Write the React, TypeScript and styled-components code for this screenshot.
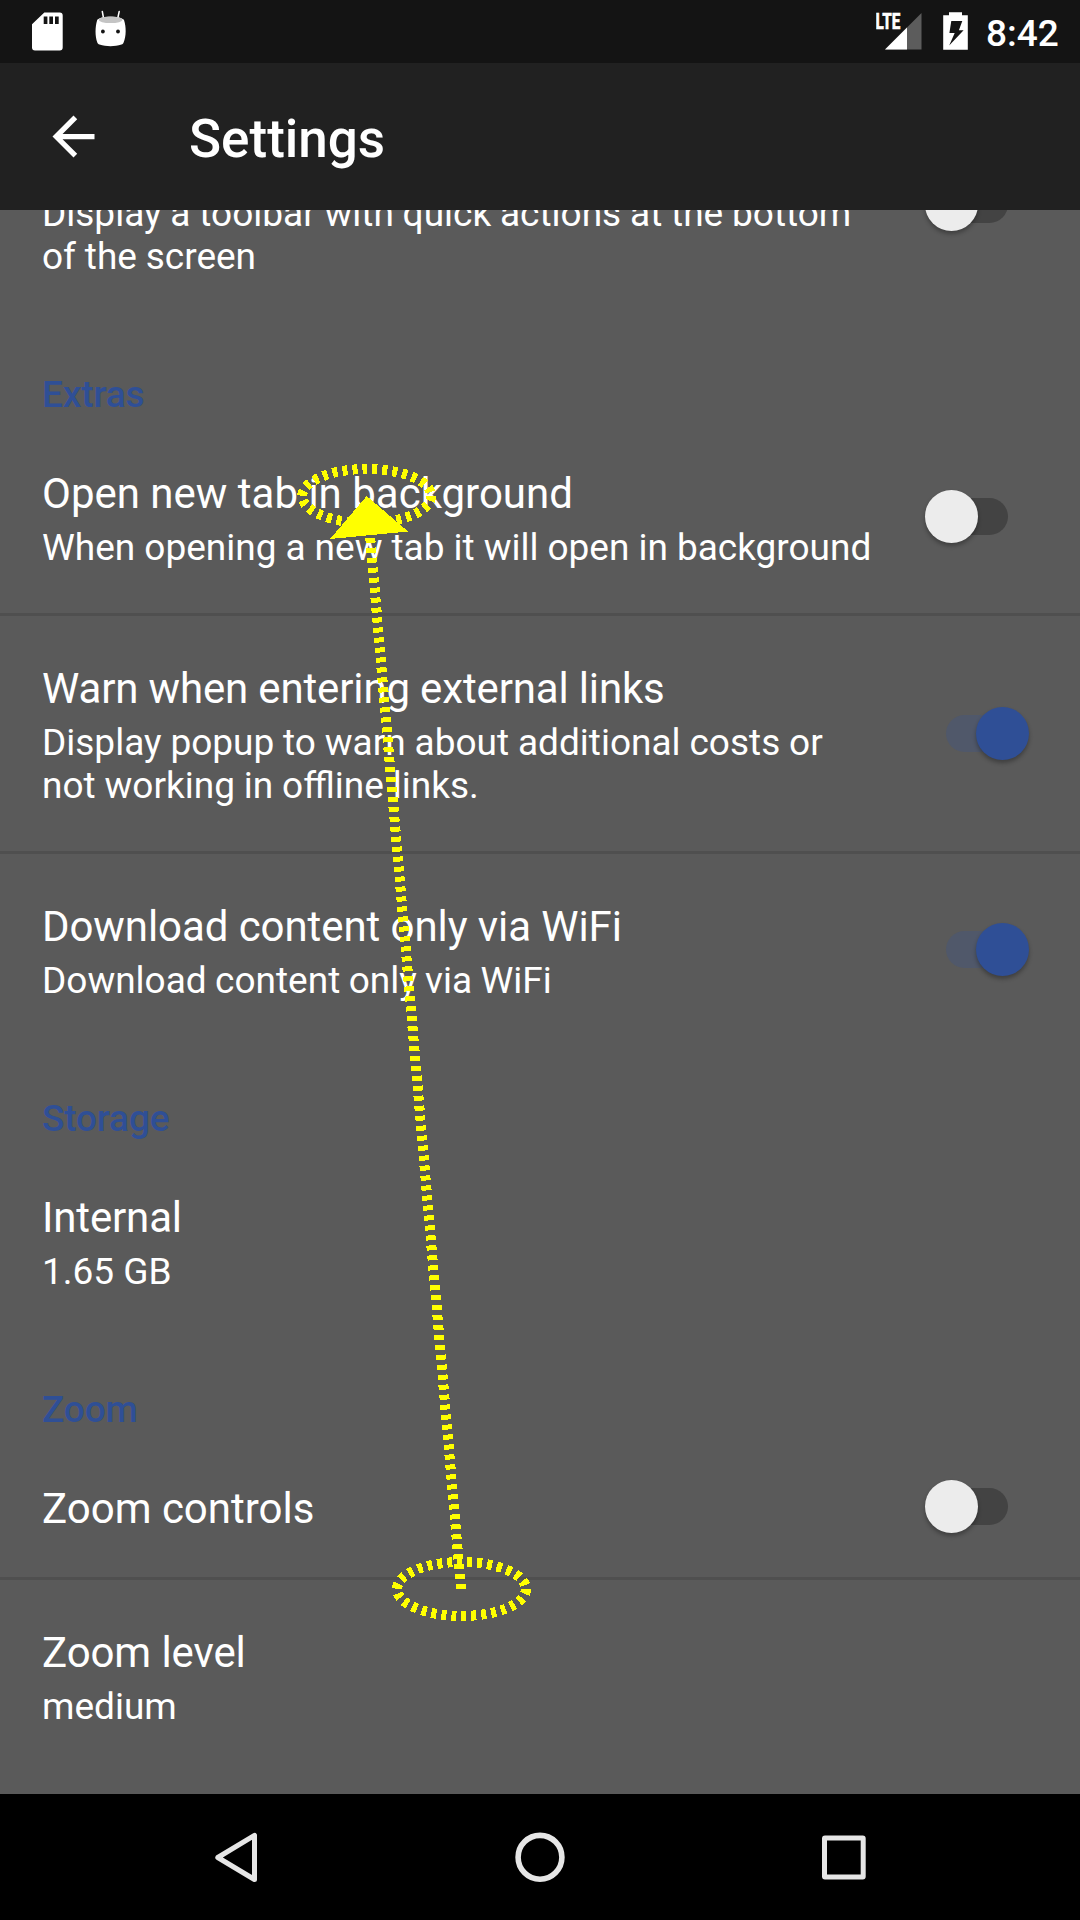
import React from "react";
import styled, { createGlobalStyle } from "styled-components";

const GlobalStyle = createGlobalStyle`
  * { box-sizing: border-box; }
  body {
    margin: 0;
    background: #5a5a5a;
    font-family: Roboto, "Liberation Sans", sans-serif;
    color: #fff;
  }
`;

const Screen = styled.div`
  position: relative;
  display: flex;
  flex-direction: column;
  width: 1080px;
  height: 1920px;
  overflow: hidden;
  background: #5a5a5a;
`;

const StatusBar = styled.header`
  display: flex;
  justify-content: space-between;
  height: 63px;
  flex: none;
  padding: 0 21px 0 32px;
  background: #141414;
`;

const StatusGroup = styled.div<{ $gap: number }>`
  display: flex;
  gap: ${(p) => p.$gap}px;
`;

const Clock = styled.time`
  width: 73px;
  margin-left: 18px;
  padding-top: 12px;
  font-size: 37px;
  font-weight: 500;
  line-height: 43px;
  white-space: nowrap;
`;

const AppBar = styled.div`
  display: flex;
  align-items: center;
  height: 147px;
  flex: none;
  padding-left: 42px;
  gap: 84px;
  background: #212121;
`;

const BarTitle = styled.h1`
  margin: 4px 0 0;
  font-size: 53px;
  font-weight: 500;
  line-height: 62px;
`;

const Viewport = styled.main`
  flex: 1;
  min-height: 0;
  overflow: hidden;
`;

const List = styled.div<{ $scroll: number }>`
  display: flex;
  flex-direction: column;
  margin-top: -${(p) => p.$scroll}px;
`;

const Category = styled.h2`
  height: 96px;
  flex: none;
  margin: 0;
  padding: 48px 42px 0;
  font-size: 37px;
  font-weight: 500;
  line-height: 43px;
  letter-spacing: -0.15px;
  color: #2f4f96;
`;

const Row = styled.div<{ $divider?: boolean }>`
  display: flex;
  align-items: center;
  justify-content: space-between;
  flex: none;
  padding: 0 51px 0 42px;
  border-bottom: 3px solid ${(p) => (p.$divider ? "#4f4f4f" : "transparent")};
`;

const RowText = styled.div<{ $untitled?: boolean }>`
  padding: ${(p) => (p.$untitled ? 97 : 49)}px 0 44px;
`;

const RowTitle = styled.div<{ $tracking: number }>`
  font-size: 42px;
  line-height: 48px;
  letter-spacing: ${(p) => p.$tracking}px;
`;

const Summary = styled.div<{ $wordGap: number }>`
  margin-top: 8px;
  font-size: 37px;
  line-height: 43px;
  word-spacing: ${(p) => p.$wordGap}px;
  white-space: pre;
`;

const Toggle = styled.div<{ $on: boolean }>`
  display: flex;
  align-items: center;
  justify-content: ${(p) => (p.$on ? "flex-end" : "flex-start")};
  width: 104px;
  height: 53px;
  margin-bottom: 1px;
`;

const Track = styled.div<{ $on: boolean }>`
  width: 62px;
  height: 37px;
  flex: none;
  margin: ${(p) => (p.$on ? "0 -32px 0 0" : "0 0 0 -32px")};
  order: ${(p) => (p.$on ? 0 : 1)};
  border-radius: 19px;
  background: ${(p) => (p.$on ? "#50586a" : "#434343")};
`;

const Thumb = styled.div<{ $on: boolean }>`
  position: relative;
  width: 53px;
  height: 53px;
  flex: none;
  order: ${(p) => (p.$on ? 1 : 0)};
  border-radius: 50%;
  background: ${(p) => (p.$on ? "#2f4f96" : "#ececec")};
  box-shadow: 0 3px 4px rgba(0, 0, 0, 0.3);
`;

const NavBar = styled.nav`
  display: flex;
  align-items: center;
  justify-content: center;
  gap: 241px;
  height: 126px;
  flex: none;
  padding-right: 1px;
  background: #000;
`;

const Overlay = styled.svg`
  position: absolute;
  inset: 0;
  pointer-events: none;
`;

const Switch = ({ on }: { on: boolean }) => (
  <Toggle $on={on} role="switch" aria-checked={on}>
    <Track $on={on} />
    <Thumb $on={on} />
  </Toggle>
);

type SettingProps = {
  title?: string;
  summary?: string;
  on?: boolean;
  divider?: boolean;
  tracking?: number;
  wordGap?: number;
};

const Setting = ({ title, summary, on, divider, tracking = 0, wordGap = 0 }: SettingProps) => (
  <Row $divider={divider}>
    <RowText $untitled={!title}>
      {title && <RowTitle $tracking={tracking}>{title}</RowTitle>}
      {summary && <Summary $wordGap={wordGap}>{summary}</Summary>}
    </RowText>
    {on !== undefined && <Switch on={on} />}
  </Row>
);

const SdCard = () => (
  <svg width="31" height="63" viewBox="32 0 31 63">
    <path d="M44.3 12.5H59.7a3 3 0 0 1 3 3V47.500a3 3 0 0 1-3 3H35a3 3 0 0 1-3-3V24.300z" fill="#fff" />
    <path d="M43.700 16.500h3.700v7.500h-3.700zM49.300 16.500h3.700v7.500h-3.700zM55 16.500h3.700v7.500H55z" fill="#141414" />
  </svg>
);

const DroidHead = () => (
  <svg width="32" height="63" viewBox="95 0 32 63">
    <path d="M102.300 11.500l1.300 7M119.200 11.500l-1.500 7" stroke="#fff" strokeWidth="1.500" strokeLinecap="round" />
    <path d="M97.200 20C95 27 95 36 97.300 42.600c.4 1.200 1 1.700 2.200 2 7 2.300 15 2.300 22 0 1.200-.3 1.700-.8 2.100-2C126.300 36 126.300 27 124 20c-2.500-4.500-24.500-4.500-26.800 0z" fill="#fff" />
    <ellipse cx="110.600" cy="19.800" rx="12" ry="3.300" fill="#c4c4c4" />
    <circle cx="102.900" cy="31.500" r="1.900" fill="#141414" />
    <circle cx="118" cy="31.500" r="1.900" fill="#141414" />
  </svg>
);

const Signal = () => (
  <svg width="46" height="63" viewBox="876 0 46 63">
    <path d="M885 49.500L921.500 13v36.500z" fill="#5c5c5c" />
    <path d="M885 49.500L907 27.500v22z" fill="#fff" />
    <text x="875.500" y="29" fontSize="21.800" fontWeight="800" textLength="24.800" lengthAdjust="spacingAndGlyphs" fill="#fff" stroke="#fff" strokeWidth="0.500">LTE</text>
  </svg>
);

const Battery = () => (
  <svg width="25" height="63" viewBox="943 0 25 63">
    <path d="M943.200 15.200H949V12.300h13v2.900h5.800v34.500h-24.600z" fill="#fff" />
    <path d="M951.300 21h11l-3.400 9.300h4.700l-14.400 15.200 5.500-12.500h-5.300z" fill="#141414" />
  </svg>
);

export default function App() {
  return (
    <>
      <GlobalStyle />
      <Screen>
        <StatusBar>
          <StatusGroup $gap={32}>
            <SdCard />
            <DroidHead />
          </StatusGroup>
          <StatusGroup $gap={0}>
            <StatusGroup $gap={21}>
              <Signal />
              <Battery />
            </StatusGroup>
            <Clock>8:42</Clock>
          </StatusGroup>
        </StatusBar>

        <AppBar>
          <svg width="63" height="63" viewBox="0 0 24 24">
            <path d="M20 11H7.830l5.590-5.590L12 4l-8 8 8 8 1.410-1.410L7.830 13H20v-2z" fill="#fff" />
          </svg>
          <BarTitle>Settings</BarTitle>
        </AppBar>

        <Viewport>
          <List $scroll={123}>
            <Setting
              summary={"Display a toolbar with quick actions at the bottom\nof the screen"}
              on={false}
              wordGap={-0.35}
            />
            <Category>Extras</Category>
            <Setting
              title="Open new tab in background"
              summary="When opening a new tab it will open in background"
              on={false}
              wordGap={-0.15}
              divider
            />
            <Setting
              title="Warn when entering external links"
              summary={"Display popup to warn about additional costs or\nnot working in offline links."}
              on
              tracking={-0.15}
              wordGap={-0.3}
              divider
            />
            <Setting
              title="Download content only via WiFi"
              summary="Download content only via WiFi"
              on
              tracking={-0.08}
              wordGap={-0.8}
            />
            <Category>Storage</Category>
            <Setting title="Internal" summary="1.65 GB" tracking={-0.15} />
            <Category>Zoom</Category>
            <Setting title="Zoom controls" on={false} divider />
            <Setting title="Zoom level" summary="medium" tracking={-0.1} />
          </List>
        </Viewport>

        <NavBar>
          <svg width="63" height="63" viewBox="204 1825.500 63 63" fill="none">
            <path d="M254.500 1834.800v44.200L217.800 1857z" stroke="#e6e6e6" strokeWidth="5" strokeLinejoin="round" />
          </svg>
          <svg width="63" height="63" viewBox="508 1825.500 63 63" fill="none">
            <circle cx="540" cy="1856.800" r="21.900" stroke="#e6e6e6" strokeWidth="5.600" />
          </svg>
          <svg width="63" height="63" viewBox="812 1825.500 63 63" fill="none">
            <rect x="824.500" y="1837.500" width="38.700" height="39" rx="0.500" stroke="#e6e6e6" strokeWidth="5" strokeLinejoin="round" />
          </svg>
        </NavBar>

        <Overlay width="1080" height="1920" fill="none" shapeRendering="crispEdges">
          <g stroke="#ff0" strokeWidth="10" strokeDasharray="5 5">
            <ellipse cx="366.700" cy="496" rx="64.500" ry="27" />
            <ellipse cx="461.500" cy="1589" rx="64.500" ry="27" />
            <path d="M461 1589L370 535" />
          </g>
          <path d="M366.700 496L330 539l78-7.500z" fill="#ff0" />
        </Overlay>
      </Screen>
    </>
  );
}
